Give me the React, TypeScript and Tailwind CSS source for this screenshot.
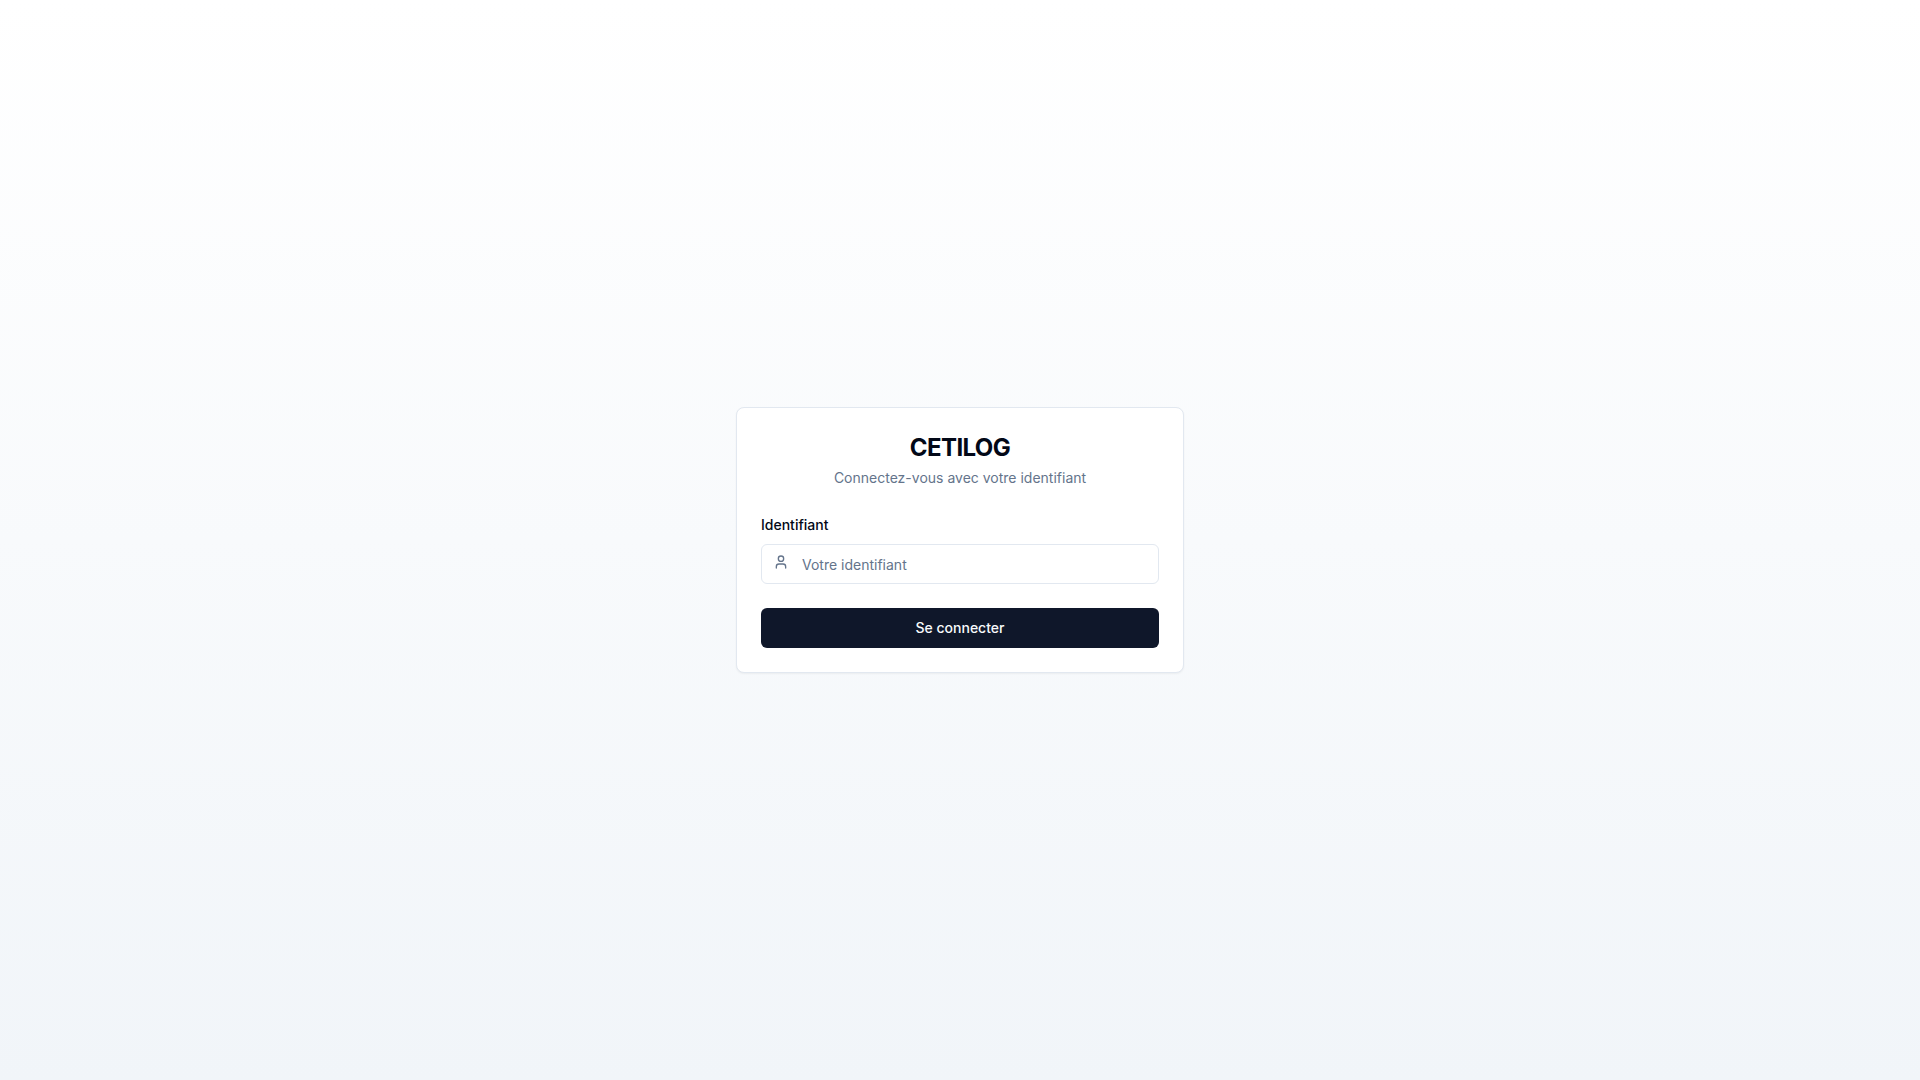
import React, { useState } from "react";
import { User } from "lucide-react";

const App = () => {
  const [identifiant, setIdentifiant] = useState("");

  return (
    <main className="flex min-h-screen items-center justify-center bg-linear-to-b/srgb from-white to-[#f1f5f9] p-4 font-['Inter',sans-serif] text-[#020817] antialiased">
      <div className="w-full max-w-md rounded-lg border border-[#e2e8f0] bg-white shadow-xs">
        <div className="flex flex-col space-y-1 p-6 text-center">
          <h1 className="text-2xl font-bold tracking-tight">CETILOG</h1>
          <p className="text-sm text-[#64748b]">Connectez-vous avec votre identifiant</p>
        </div>

        <form onSubmit={(e) => e.preventDefault()}>
          <div className="p-6 pt-0">
            <label htmlFor="identifiant" className="text-sm leading-none font-medium">
              Identifiant
            </label>
            <div className="relative mt-2">
              <User className="absolute top-2.5 left-3 h-4 w-4 text-[#64748b]" />
              <input
                id="identifiant"
                type="text"
                placeholder="Votre identifiant"
                value={identifiant}
                onChange={(e) => setIdentifiant(e.target.value)}
                className="h-10 w-full rounded-md border border-[#e2e8f0] bg-white px-3 py-2 pl-10 text-sm placeholder:text-[#64748b]"
              />
            </div>
          </div>

          <div className="flex items-center p-6 pt-0">
            <button
              type="submit"
              className="h-10 w-full rounded-md bg-[#0f172a] px-4 py-2 text-sm font-medium text-[#f8fafc]"
            >
              Se connecter
            </button>
          </div>
        </form>
      </div>
    </main>
  );
};

export default App;
